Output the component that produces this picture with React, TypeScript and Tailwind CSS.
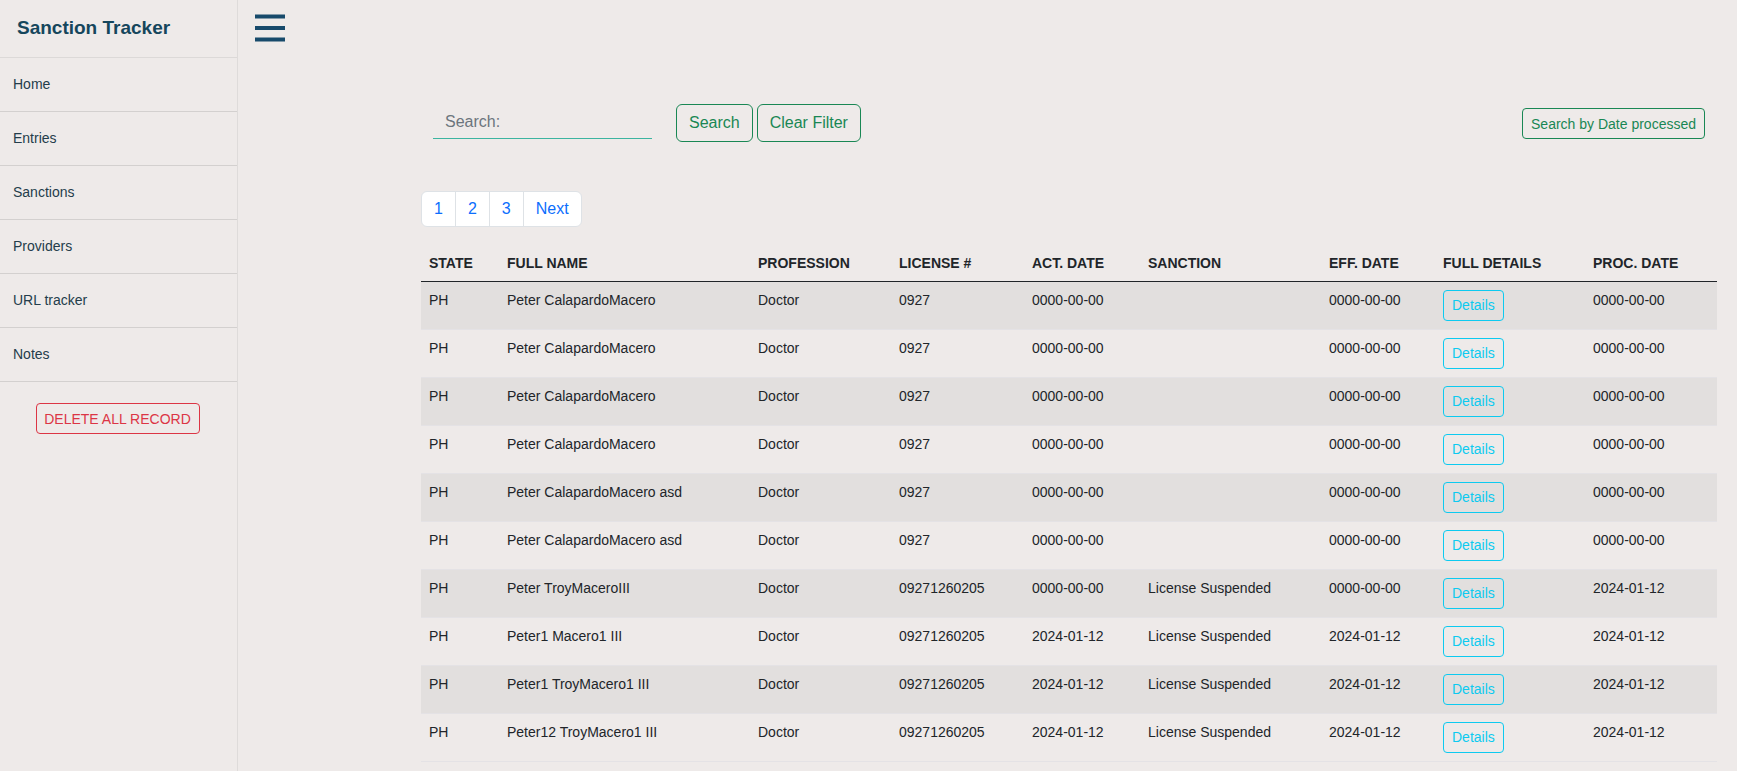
import React from "react";

type Row = {
  state: string;
  name: string;
  profession: string;
  license: string;
  actDate: string;
  sanction: string;
  effDate: string;
  procDate: string;
};

const rows: Row[] = [
  { state: "PH", name: "Peter CalapardoMacero", profession: "Doctor", license: "0927", actDate: "0000-00-00", sanction: "", effDate: "0000-00-00", procDate: "0000-00-00" },
  { state: "PH", name: "Peter CalapardoMacero", profession: "Doctor", license: "0927", actDate: "0000-00-00", sanction: "", effDate: "0000-00-00", procDate: "0000-00-00" },
  { state: "PH", name: "Peter CalapardoMacero", profession: "Doctor", license: "0927", actDate: "0000-00-00", sanction: "", effDate: "0000-00-00", procDate: "0000-00-00" },
  { state: "PH", name: "Peter CalapardoMacero", profession: "Doctor", license: "0927", actDate: "0000-00-00", sanction: "", effDate: "0000-00-00", procDate: "0000-00-00" },
  { state: "PH", name: "Peter CalapardoMacero asd", profession: "Doctor", license: "0927", actDate: "0000-00-00", sanction: "", effDate: "0000-00-00", procDate: "0000-00-00" },
  { state: "PH", name: "Peter CalapardoMacero asd", profession: "Doctor", license: "0927", actDate: "0000-00-00", sanction: "", effDate: "0000-00-00", procDate: "0000-00-00" },
  { state: "PH", name: "Peter TroyMaceroIII", profession: "Doctor", license: "09271260205", actDate: "0000-00-00", sanction: "License Suspended", effDate: "0000-00-00", procDate: "2024-01-12" },
  { state: "PH", name: "Peter1 Macero1 III", profession: "Doctor", license: "09271260205", actDate: "2024-01-12", sanction: "License Suspended", effDate: "2024-01-12", procDate: "2024-01-12" },
  { state: "PH", name: "Peter1 TroyMacero1 III", profession: "Doctor", license: "09271260205", actDate: "2024-01-12", sanction: "License Suspended", effDate: "2024-01-12", procDate: "2024-01-12" },
  { state: "PH", name: "Peter12 TroyMacero1 III", profession: "Doctor", license: "09271260205", actDate: "2024-01-12", sanction: "License Suspended", effDate: "2024-01-12", procDate: "2024-01-12" },
];

const navItems = ["Home", "Entries", "Sanctions", "Providers", "URL tracker", "Notes"];

function Sidebar() {
  return (
    <aside className="w-[238px] shrink-0 border-r border-[#dedbda]">
      <div className="h-[58px] flex items-center pl-[17px] border-b border-[#dcd9d8]">
        <h1 className="text-[19px] font-bold text-[#15465c]">Sanction Tracker</h1>
      </div>
      <nav>
        {navItems.map((item) => (
          <a
            key={item}
            href="#"
            className="h-[54px] flex items-center pl-[13px] pb-[2px] text-sm text-[#243d4b] border-b border-[#d3d0cf]"
          >
            {item}
          </a>
        ))}
      </nav>
      <div className="flex justify-center pt-[21px] pr-[2px]">
        <button className="w-[164px] h-[31px] text-sm text-[#dc3545] border border-[#dc3545] rounded-[4px]">
          DELETE ALL RECORD
        </button>
      </div>
    </aside>
  );
}

function Hamburger() {
  return (
    <svg width="30" height="28" viewBox="0 0 30 28">
      <rect x="0" y="0.5" width="30" height="4" fill="#174a6b" />
      <rect x="0" y="12" width="30" height="4" fill="#174a6b" />
      <rect x="0" y="23.5" width="30" height="4" fill="#174a6b" />
    </svg>
  );
}

function App() {
  return (
    <div className="flex min-h-screen bg-[#eeeae9] font-['Liberation_Sans',Arial,sans-serif] text-[#212529]">
      <Sidebar />
      <main className="flex-1">
        <header className="h-[52px] pl-[17px] pt-[14px]">
          <Hamburger />
        </header>

        <div className="pl-[183px] pr-[20px] pt-[49px]">
          {/* search row */}
          <div className="flex items-start justify-between px-[12px]">
            <div className="flex items-start">
              <input
                type="text"
                placeholder="Search:"
                className="w-[219px] h-[38px] pt-[9px] pb-[5px] px-[12px] text-base bg-transparent border-b border-[#3cb4a0] outline-none placeholder:text-[#6c757d]"
              />
              <button className="ml-[24px] mt-[3px] h-[38px] px-[12px] text-base text-[#198754] border border-[#198754] rounded-[6px]">
                Search
              </button>
              <button className="ml-[4px] mt-[3px] h-[38px] px-[12px] text-base text-[#198754] border border-[#198754] rounded-[6px]">
                Clear Filter
              </button>
            </div>
            <button className="mt-[7px] h-[31px] px-[8px] text-sm text-[#198754] border border-[#198754] rounded-[4px]">
              Search by Date processed
            </button>
          </div>

          {/* pagination */}
          <div className="mt-[49px] flex">
            <div className="flex bg-white border border-[#dee2e6] rounded-[6px] text-base text-[#0d6efd]">
              <a href="#" className="px-[12px] py-[5px] leading-6 border-r border-[#dee2e6]">1</a>
              <a href="#" className="px-[12px] py-[5px] leading-6 border-r border-[#dee2e6]">2</a>
              <a href="#" className="px-[12px] py-[5px] leading-6 border-r border-[#dee2e6]">3</a>
              <a href="#" className="px-[12px] py-[5px] leading-6">Next</a>
            </div>
          </div>

          {/* table */}
          <table className="mt-[17px] w-[1296px] table-fixed border-collapse text-sm">
            <thead>
              <tr className="border-b border-[#212529] text-left uppercase">
                <th className="w-[78px] px-[8px] pt-[9px] pb-[8px] leading-5 font-bold">State</th>
                <th className="w-[251px] px-[8px] pt-[9px] pb-[8px] leading-5 font-bold">Full Name</th>
                <th className="w-[141px] px-[8px] pt-[9px] pb-[8px] leading-5 font-bold">Profession</th>
                <th className="w-[133px] px-[8px] pt-[9px] pb-[8px] leading-5 font-bold">License #</th>
                <th className="w-[116px] px-[8px] pt-[9px] pb-[8px] leading-5 font-bold">Act. Date</th>
                <th className="w-[181px] px-[8px] pt-[9px] pb-[8px] leading-5 font-bold">Sanction</th>
                <th className="w-[114px] px-[8px] pt-[9px] pb-[8px] leading-5 font-bold">Eff. Date</th>
                <th className="w-[150px] px-[8px] pt-[9px] pb-[8px] leading-5 font-bold">Full Details</th>
                <th className="w-[132px] px-[8px] pt-[9px] pb-[8px] leading-5 font-bold">Proc. Date</th>
              </tr>
            </thead>
            <tbody>
              {rows.map((r, i) => (
                <tr
                  key={i}
                  className={
                    i % 2 === 0
                      ? "bg-[#e2dfde] border-b border-[#e4e2e5] align-top"
                      : "border-b border-[#e4e2e5] align-top"
                  }
                >
                  <td className="px-[8px] py-[8px] leading-5">{r.state}</td>
                  <td className="px-[8px] py-[8px] leading-5">{r.name}</td>
                  <td className="px-[8px] py-[8px] leading-5">{r.profession}</td>
                  <td className="px-[8px] py-[8px] leading-5">{r.license}</td>
                  <td className="px-[8px] py-[8px] leading-5">{r.actDate}</td>
                  <td className="px-[8px] py-[8px] leading-5">{r.sanction}</td>
                  <td className="px-[8px] py-[8px] leading-5">{r.effDate}</td>
                  <td className="px-[8px] py-[8px]">
                    <button className="h-[31px] px-[8px] text-sm leading-[21px] text-[#0dcaf0] border border-[#0dcaf0] rounded-[4px]">
                      Details
                    </button>
                  </td>
                  <td className="px-[8px] py-[8px] leading-5">{r.procDate}</td>
                </tr>
              ))}
            </tbody>
          </table>
        </div>
      </main>
    </div>
  );
}

export default App;
